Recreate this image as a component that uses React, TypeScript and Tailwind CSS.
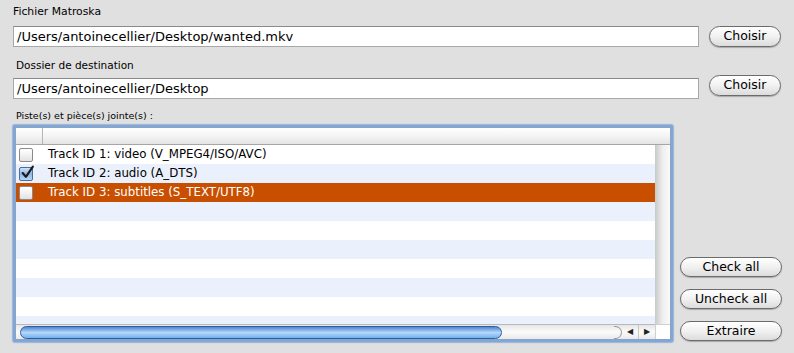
import React from "react";

const font = { fontFamily: '"DejaVu Sans", "Liberation Sans", sans-serif' };

function AquaButton({ children, className = "" }: { children: React.ReactNode; className?: string }) {
  return (
    <button
      className={`flex items-center justify-center rounded-full border border-[#6b6b6b] bg-gradient-to-b from-[#ffffff] via-[#f1f1f1] to-[#dcdcdc] text-[12.5px] text-black shadow-[0_1px_1px_rgba(0,0,0,0.25)] ${className}`}
    >
      {children}
    </button>
  );
}

function Checkbox({ checked }: { checked?: boolean }) {
  if (checked) {
    return (
      <div className="relative h-[14px] w-[14px] rounded-[2px] border border-[#4a6d9a] bg-gradient-to-b from-[#cfe2f7] via-[#8db6e6] to-[#b9d6f5]">
        <svg viewBox="0 0 14 14" className="absolute left-[0px] top-[-3px] h-[15px] w-[15px]">
          <path d="M2.5 7.5 L5.5 11 L12 1.5" fill="none" stroke="#1a1a1a" strokeWidth="2" strokeLinecap="round" strokeLinejoin="round" />
        </svg>
      </div>
    );
  }
  return (
    <div className="h-[14px] w-[14px] rounded-[2px] border border-[#8a8a8a] bg-gradient-to-b from-[#ffffff] via-[#f2f2f2] to-[#e2e2e2]" />
  );
}

const tracks = [
  { label: "Track ID 1: video (V_MPEG4/ISO/AVC)", checked: false },
  { label: "Track ID 2: audio (A_DTS)", checked: true },
  { label: "Track ID 3: subtitles (S_TEXT/UTF8)", checked: false, selected: true },
];

export default function App() {
  const rows = Array.from({ length: 10 }, (_, i) => i);
  return (
    <div className="h-[353px] w-[794px] overflow-hidden bg-[#e0e0e0] text-black" style={font}>
      <div className="pl-[13px] pt-[5px] text-[10.8px] leading-[14px]">Fichier Matroska</div>
      <div className="mt-[7px] flex items-start pl-[13px]">
        <div className="flex h-[21px] w-[686px] items-center border border-[#a8a8a8] border-t-[#8a8a8a] bg-white pl-[3px] text-[13px]">
          /Users/antoinecellier/Desktop/wanted.mkv
        </div>
        <AquaButton className="ml-[10px] h-[21px] w-[72px]">Choisir</AquaButton>
      </div>

      <div className="mt-[11px] pl-[16px] text-[10.5px] leading-[14px]">Dossier de destination</div>
      <div className="mt-[3px] flex items-start pl-[13px]">
        <div className="mt-[3px] flex h-[21px] w-[686px] items-center border border-[#a8a8a8] border-t-[#8a8a8a] bg-white pl-[3px] text-[13px]">
          /Users/antoinecellier/Desktop
        </div>
        <AquaButton className="ml-[10px] h-[21px] w-[72px]">Choisir</AquaButton>
      </div>

      <div className="mt-[10px] pl-[16px] text-[9.5px] leading-[13px]">Piste(s) et pièce(s) jointe(s) :</div>

      <div className="mt-[3px] flex items-end pl-[13px]">
        <div className="h-[217px] w-[660px] rounded-[2px] border-[2px] border-[#7fa8d9] bg-white shadow-[0_0_1px_1px_rgba(110,150,210,0.6)]">
          <div className="flex h-full flex-col border border-[#8ba4c4]">
            <div className="flex h-[17px] border-b border-[#a6a6a6] bg-gradient-to-b from-[#ffffff] via-[#f4f4f4] to-[#e4e4e4]">
              <div className="w-[27px] border-r border-[#b5b5b5]" />
              <div className="flex-1" />
            </div>
            <div className="flex min-h-0 flex-1">
              <div className="flex min-w-0 flex-1 flex-col">
                <div className="min-h-0 flex-1 overflow-hidden">
                  {rows.map((i) => {
                    const t = tracks[i];
                    const bg = t?.selected ? "bg-[#c94f00]" : i % 2 === 1 ? "bg-[#ebf1fc]" : "bg-white";
                    return (
                      <div key={i} className={`flex h-[19px] items-center ${bg}`}>
                        {t && (
                          <>
                            <div className="ml-[3px] w-[29px]">
                              <Checkbox checked={t.checked} />
                            </div>
                            <span className={`text-[11.8px] ${t.selected ? "text-white" : "text-black"}`}>{t.label}</span>
                          </>
                        )}
                      </div>
                    );
                  })}
                </div>
                <div className="flex h-[15px] items-center border-t border-[#b9b9b9] bg-gradient-to-b from-[#e6e6e6] via-[#fbfbfb] to-[#e9e9e9]">
                  <div className="ml-[4px] h-[13px] w-[482px] rounded-full border border-[#2f5e9f] bg-gradient-to-b from-[#4f86cf] via-[#b6d8fa] to-[#6fb0f0]" />
                  <div className="ml-auto flex h-full items-center">
                    <div className="h-[13px] w-[8px] rounded-r-full border border-l-0 border-[#9a9a9a]" />
                    <div className="flex h-full w-[16px] items-center justify-center text-[8px] text-[#222]">◀</div>
                    <div className="h-full w-px bg-[#c8c8c8]" />
                    <div className="flex h-full w-[16px] items-center justify-center text-[8px] text-[#222]">▶</div>
                  </div>
                </div>
              </div>
              <div className="flex w-[15px] flex-col">
                <div className="flex-1 bg-gradient-to-r from-[#c9c9c9] via-[#eeeeee] to-[#fafafa]" />
                <div className="h-[15px] border-l border-t border-[#d0d0d0] bg-white" />
              </div>
            </div>
          </div>
        </div>

        <div className="mb-[1px] ml-[7px] flex flex-col gap-[12px]">
          <AquaButton className="h-[20px] w-[102px]">Check all</AquaButton>
          <AquaButton className="h-[20px] w-[102px]">Uncheck all</AquaButton>
          <AquaButton className="h-[20px] w-[102px]">Extraire</AquaButton>
        </div>
      </div>
    </div>
  );
}
